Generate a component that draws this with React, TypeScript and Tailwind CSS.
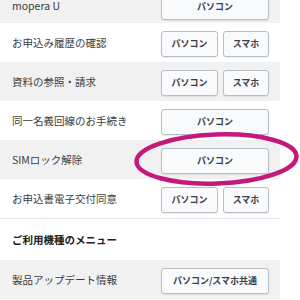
import React from "react";

const font = { fontFamily: '"Noto Sans CJK JP", "Noto Sans", sans-serif' };

function Btn({ label, w }: { label: string; w: string }) {
  return (
    <div
      className={`${w} h-[26px] flex items-center justify-center rounded-[3px] border border-[#b7bec6] bg-[#f8fafc] text-[9px] font-bold text-[#3b4047] shadow-[0_1px_1px_rgba(0,0,0,0.08)]`}
    >
      {label}
    </div>
  );
}

function Row({ label, gray, kind, h = "h-[39px]" }: { label: string; gray?: boolean; kind: "one" | "two" | "shared"; h?: string }) {
  return (
    <div className={`${h} flex items-center justify-between pl-3 pr-[11px] ${gray ? "bg-[#f1f1f2]" : "bg-white"}`}>
      <span className="text-[10.5px] text-[#3c3c3c]">{label}</span>
      {kind === "two" ? (
        <div className="flex gap-[5px] pt-[3px]">
          <Btn label="パソコン" w="w-[57px]" />
          <Btn label="スマホ" w="w-[46px]" />
        </div>
      ) : (
        <div className="pt-[3px]">
          <Btn label={kind === "shared" ? "パソコン/スマホ共通" : "パソコン"} w="w-[108px]" />
        </div>
      )}
    </div>
  );
}

export default function App() {
  return (
    <div className="relative w-[300px] h-[300px] overflow-hidden bg-white" style={font}>
      <div className="w-[280px] -mt-[12px]">
        <Row label="mopera U" gray kind="one" h="h-[35px]" />
        <Row label="お申込み履歴の確認" kind="two" />
        <Row label="資料の参照・請求" gray kind="two" />
        <Row label="同一名義回線のお手続き" kind="one" />
        <Row label="SIMロック解除" gray kind="one" />
        <Row label="お申込書電子交付同意" kind="two" />
        <div className="h-[42px] flex items-center pl-3 border-t border-[#e6e7e8] bg-white">
          <span className="text-[10.5px] font-bold text-[#222]">ご利用機種のメニュー</span>
        </div>
        <Row label="製品アップデート情報" gray kind="shared" />
      </div>
      <svg className="absolute left-0 top-0" width="300" height="300" viewBox="0 0 300 300">
        <ellipse
          cx="216.5"
          cy="159"
          rx="80"
          ry="24.5"
          fill="none"
          stroke="#c4197c"
          strokeWidth="4.5"
          transform="rotate(-2 216.5 159)"
        />
      </svg>
    </div>
  );
}
